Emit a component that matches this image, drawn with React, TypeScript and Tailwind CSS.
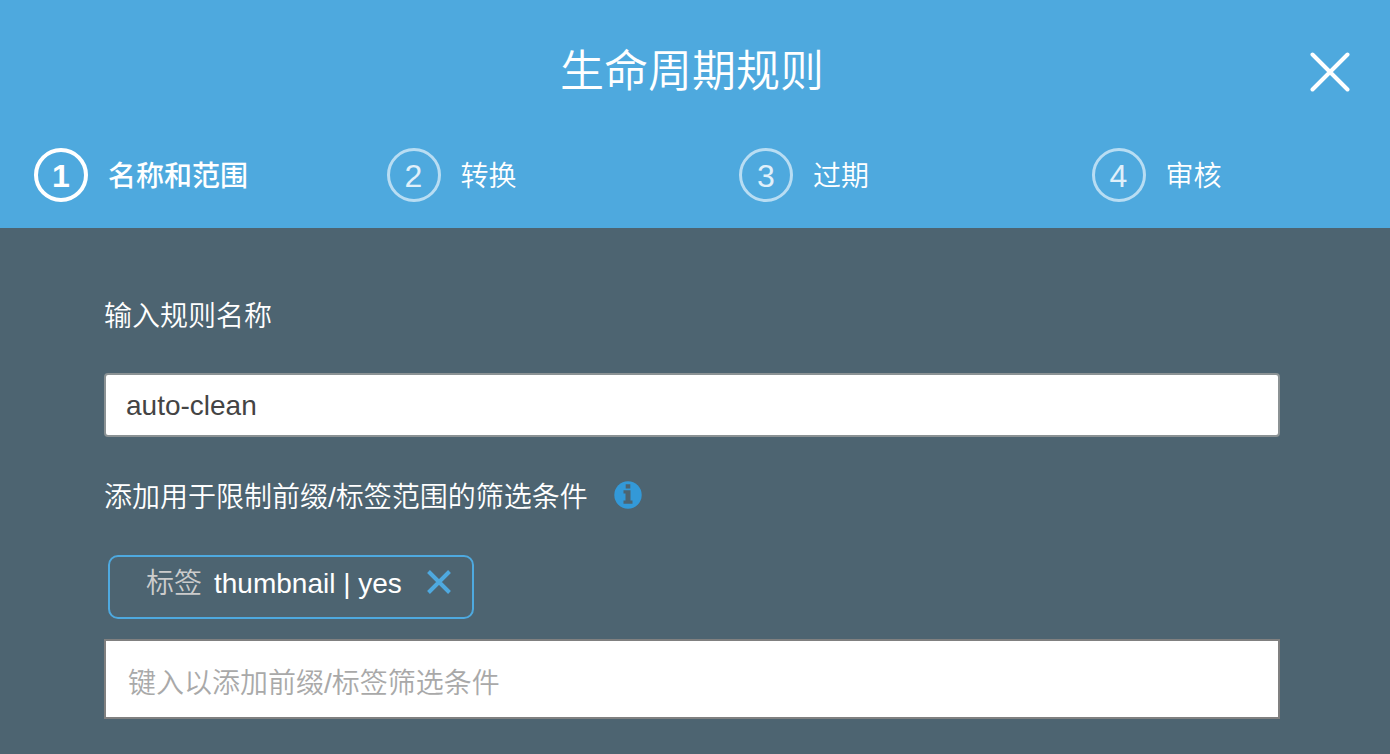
import React from "react";

const steps = ["名称和范围", "转换", "过期", "审核"];

function Step({ index, label }: { index: number; label: string }) {
  const active = index === 0;
  return (
    <li className="flex-1">
      <button type="button" aria-current={active ? "step" : undefined} className="flex items-center gap-5 text-left">
        <span
          className={
            active
              ? "flex size-[54px] items-center justify-center rounded-full border-4 border-white pt-0.5 text-[32px] leading-none font-bold text-white"
              : "flex size-[54px] items-center justify-center rounded-full border-3 border-[#b8ddf3] pt-0.5 text-[32px] leading-none text-[#e0f0fa]"
          }
        >
          {index + 1}
        </span>
        <span className={active ? "pt-1 text-[28px] font-medium" : "pt-1 text-[28px]"}>{label}</span>
      </button>
    </li>
  );
}

export default function App() {
  return (
    <div className="min-h-screen bg-[#4d6471] font-['Liberation_Sans','Noto_Sans_CJK_SC',sans-serif] font-[350] text-white">
      <header className="bg-[#4ea9de] pb-[26px]">
        <div className="grid grid-cols-[114px_1fr_120px] items-center pt-[38px] pb-[42px]">
          <h1 className="col-start-2 text-center text-[44px] leading-[68px] font-[350]">生命周期规则</h1>
          <button type="button" aria-label="关闭" className="justify-self-center">
            <svg viewBox="0 0 40 40" className="size-10" fill="none" stroke="currentColor" strokeWidth="4" strokeLinecap="round">
              <path d="M2.5 2.5 37.5 37.5M37.5 2.5 2.5 37.5" />
            </svg>
          </button>
        </div>
        <ol className="-mr-[54px] flex pl-[34px]">
          {steps.map((label, i) => (
            <Step key={label} index={i} label={label} />
          ))}
        </ol>
      </header>
      <main className="pt-[68px] pr-[110px] pb-9 pl-[104px] text-[28px]">
        <label htmlFor="rule-name" className="block leading-[42px]">输入规则名称</label>
        <input
          id="rule-name"
          defaultValue="auto-clean"
          className="mt-[35px] block h-16 w-full rounded-sm border-2 border-[#8b9294] bg-white px-5 pt-0.5 text-[#444] outline-none"
        />
        <div className="mt-[38px] flex items-center gap-[26px] leading-[42px]">
          <label htmlFor="filter" className="pt-0.5">添加用于限制前缀/标签范围的筛选条件</label>
          <button type="button" aria-label="信息" className="pb-1">
            <svg viewBox="0 0 28 28" className="size-7">
              <circle cx="14" cy="14" r="13.7" fill="#3399d8" />
              <path d="M11.7 3.2h4.6v4.4h-4.6zM9.5 9.2h7v10.3h2v3.2h-9v-3.2h2v-7h-2z" fill="#4d6471" />
            </svg>
          </button>
        </div>
        <div className="mt-9 ml-1 flex h-16 w-fit items-center rounded-[10px] border-2 border-[#4ea9df] pr-[21px] pb-1.5 pl-9">
          <span className="text-[#ccc]">标签</span>
          <span className="ml-3">thumbnail | yes</span>
          <button type="button" aria-label="移除" className="mb-1 ml-[25px] text-[#4ea9df]">
            <svg viewBox="0 0 24 24" className="size-6" fill="none" stroke="currentColor" strokeWidth="4">
              <path d="M1.5 1.5 22.5 22.5M22.5 1.5 1.5 22.5" />
            </svg>
          </button>
        </div>
        <input
          id="filter"
          placeholder="键入以添加前缀/标签筛选条件"
          className="mt-5 block h-20 w-full border-2 border-[#808080] bg-white px-[22px] pt-2.5 text-[#444] outline-none placeholder:text-[#a9a9a9]"
        />
      </main>
    </div>
  );
}
